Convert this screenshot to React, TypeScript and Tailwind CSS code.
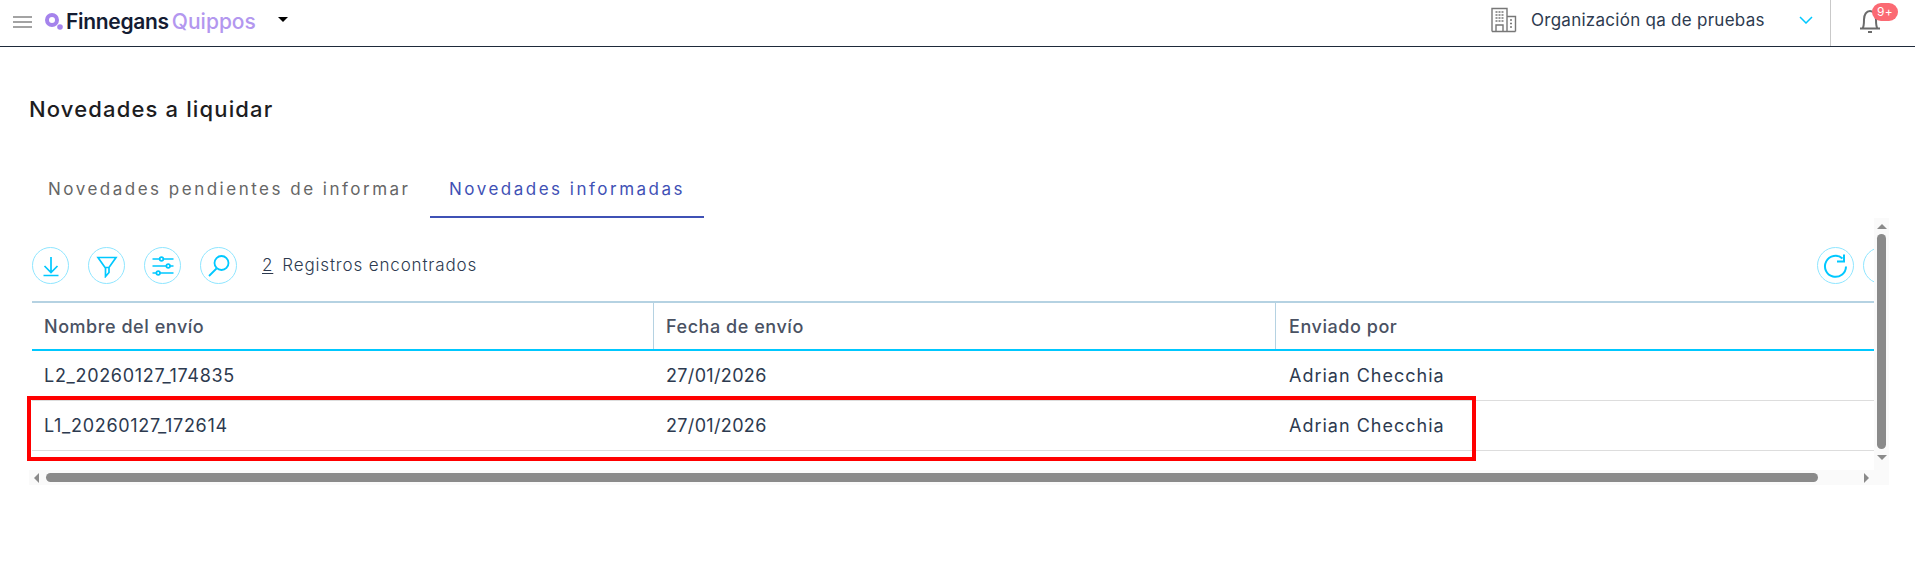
import React from "react";

const cyan = "#00c8ff";

function Circle({ children }: { children: React.ReactNode }) {
  return (
    <div className="w-[37px] h-[37px] shrink-0 rounded-full border border-[#8fe6ff] flex items-center justify-center">
      {children}
    </div>
  );
}

function IconDownload() {
  return (
    <svg width="24" height="24" viewBox="0 0 24 24" fill="none" stroke={cyan} strokeWidth="1.700">
      <path d="M12 3v15M5.500 12l6.500 6.500 6.500-6.500M4.500 21.500h15" />
    </svg>
  );
}
function IconFilter() {
  return (
    <svg width="24" height="24" viewBox="0 0 24 24" fill="none" stroke={cyan} strokeWidth="1.700">
      <path d="M3 3.500h18l-7 10H10L3 3.500zM10.500 13.500v9l3.500-4v-5" />
    </svg>
  );
}
function IconSliders() {
  return (
    <svg width="24" height="24" viewBox="0 0 24 24" fill="none" stroke={cyan} strokeWidth="1.700">
      <path d="M1.500 5h7.500M12.500 5h10M1.500 12h14M19 12h3.500M1.500 19h4M9 19h13.500" />
      <circle cx="10.500" cy="5" r="1.800" />
      <circle cx="17.200" cy="12" r="1.800" />
      <circle cx="7.200" cy="19" r="1.800" />
    </svg>
  );
}
function IconSearch() {
  return (
    <svg width="24" height="24" viewBox="0 0 24 24" fill="none" stroke={cyan} strokeWidth="1.800">
      <circle cx="14.500" cy="9" r="7" />
      <path d="M9.500 14.500L2 22" />
    </svg>
  );
}
function IconRefresh() {
  return (
    <svg width="26" height="26" viewBox="0 0 26 26" fill="none" stroke={cyan} strokeWidth="2">
      <path d="M23 13.500A10.500 10.500 0 1 1 19.500 5.500" />
      <path d="M21 1.500V8.500H14" />
    </svg>
  );
}

function Head({ children, last }: { children: React.ReactNode; last?: boolean }) {
  return (
    <div
      className={`w-[622px] shrink-0 h-full flex items-center pt-[1px] font-medium text-[#4a5263] text-[18px] tracking-[0.55px] ${
        last ? "pl-[13px]" : "pl-3 border-r border-[#b5d2e2]"
      }`}
    >
      {children}
    </div>
  );
}

function Row({ name }: { name: string }) {
  return (
    <div className="h-[50px] flex items-center border-b border-[#dddddd] text-[#2d3a4f] text-[18px]">
      <div className="w-[622px] shrink-0 pl-3 tracking-[0.7px]">{name}</div>
      <div className="w-[622px] shrink-0 pl-3 tracking-[0.34px]">27/01/2026</div>
      <div className="w-[622px] shrink-0 pl-[13px] tracking-[1px]">Adrian Checchia</div>
    </div>
  );
}

export default function App() {
  return (
    <div className="relative w-[1915px] h-[573px] bg-white overflow-hidden font-['Inter',sans-serif]">
      <header className="h-[47px] border-b border-[#1e2a3a] flex items-center">
        <div className="ml-[13px] mb-[3px] w-[19px] flex flex-col gap-[3px]">
          <div className="h-[2px] bg-[#a3a3a3]" />
          <div className="h-[2px] bg-[#a3a3a3]" />
          <div className="h-[2px] bg-[#a3a3a3]" />
        </div>
        <svg className="ml-[13px] mb-[3px]" width="18" height="17" viewBox="0 0 18 17" fill="none">
          <circle cx="7" cy="7" r="5" stroke="#a583ec" strokeWidth="4" />
          <circle cx="15" cy="14" r="2.800" fill="#a583ec" />
        </svg>
        <span className="ml-[3px] mb-[2px] text-[21px] font-semibold text-[#141c33] tracking-[-0.3px]">Finnegans</span>
        <span className="ml-[3px] mb-[2px] text-[21px] font-medium text-[#b397ef] tracking-[0px]">Quippos</span>
        <div className="ml-[22px] mb-[8px] w-0 h-0 border-x-[5px] border-x-transparent border-t-[5px] border-t-black" />
        <div className="ml-auto flex items-center h-full">
          <svg className="mb-[6px]" width="26" height="26" viewBox="0 0 26 26" fill="none" stroke="#777" strokeWidth="1.400">
            <path d="M1 24.500V1.500h15v23M16 9.500h8.500v15M1 24.500h23.500M5 24.500v-6.500h7v6.500" />
            <path d="M4.500 5h8M4.500 8h8M4.500 11h8M4.500 14h8M19 13h3M19 16.500h3M19 20h3" strokeDasharray="2 1" />
          </svg>
          <span className="ml-[14px] mb-[5px] w-[268px] whitespace-nowrap text-[17px] text-[#2d3a4f] tracking-[0.27px]">Organización qa de pruebas</span>
          <svg className="mb-[7px]" width="14" height="8" viewBox="0 0 14 8" fill="none" stroke={cyan} strokeWidth="1.500">
            <path d="M1 1l6 6 6-6" />
          </svg>
          <div className="ml-[17px] h-full border-l border-[#c9c9c9]" />
          <div className="relative w-[84px] h-full">
            <svg className="absolute left-[28px] top-[8px]" width="24" height="26" viewBox="0 0 24 26" fill="none" stroke="#6b6b6b" strokeWidth="2">
              <path d="M1 20.500h20M3.500 20.500c1.500-2 1.500-5 1.500-9 0-5 2.500-8.500 6-8.500s6 3.500 6 8.500c0 4 0 7 1.500 9" />
              <path d="M9 24h4" />
            </svg>
            <div className="absolute left-[41px] top-[3px] w-[26px] h-[18px] rounded-full bg-[#fb6a73] text-white text-[12px] tracking-[0.4px] flex items-center justify-center">
              9+
            </div>
          </div>
        </div>
      </header>

      <main className="pl-[29px]">
        <h1 className="mt-[50px] text-[22px] leading-[25px] font-medium text-[#1d1d1f] tracking-[1.150px]">Novedades a liquidar</h1>
        <nav className="mt-[40px] flex h-[56px] text-[17px] tracking-[2.500px]">
          <div className="w-[401px] pl-[19px] pt-[15px] text-[#666666] whitespace-nowrap">Novedades pendientes de informar</div>
          <div className="w-[274px] pl-[19px] pt-[15px] text-[#3f51b5] border-b-2 border-[#3f51b5] whitespace-nowrap">Novedades informadas</div>
        </nav>

        <div className="relative w-[1860px] h-[268px] flex">
          <div className="w-[1845px] overflow-hidden">
            <div className="mt-[29px] pl-[3px] h-[37px] flex items-center gap-[19px]">
              <Circle><IconDownload /></Circle>
              <Circle><IconFilter /></Circle>
              <Circle><IconSliders /></Circle>
              <Circle><IconSearch /></Circle>
              <div className="ml-[6px] flex items-center gap-[9px] text-[17px] font-light text-[#2d3a4f] tracking-[0.85px]">
                <span className="underline underline-offset-2">2</span>
                <span>Registros encontrados</span>
              </div>
              <div className="ml-auto -mr-[26px] flex gap-[9px]">
                <Circle><IconRefresh /></Circle>
                <Circle><span /></Circle>
              </div>
            </div>

            <div className="ml-[3px] mt-[17px] w-[1842px] border-t-2 border-[#b5d2e2]">
              <div className="h-[48px] flex border-b-2 border-[#00c8ff]">
                <Head>Nombre del envío</Head>
                <Head>Fecha de envío</Head>
                <Head last>Enviado por</Head>
              </div>
              <Row name="L2_20260127_174835" />
              <Row name="L1_20260127_172614" />
            </div>
          </div>

          <div className="w-[15px] h-[252px] bg-[#fafafa] flex flex-col items-center">
            <div className="mt-[6px] w-0 h-0 border-x-[5px] border-x-transparent border-b-[5px] border-b-[#8a8a8a]" />
            <div className="mt-[5px] w-[9px] h-[215px] rounded-full bg-[#8a8a8a]" />
            <div className="mt-[6px] w-0 h-0 border-x-[5px] border-x-transparent border-t-[5px] border-t-[#8a8a8a]" />
          </div>

          <div className="absolute left-0 top-[252px] w-[1860px] h-[15px] bg-[#fafafa] flex items-center">
            <div className="ml-[5px] w-0 h-0 border-y-[5px] border-y-transparent border-r-[5px] border-r-[#8a8a8a]" />
            <div className="ml-[7px] w-[1772px] h-[9px] rounded-full bg-[#8a8a8a]" />
            <div className="ml-[46px] w-0 h-0 border-y-[5px] border-y-transparent border-l-[5px] border-l-[#8a8a8a]" />
          </div>
        </div>
      </main>

      <div className="absolute left-[27px] top-[396px] w-[1449px] h-[65px] border-4 border-[#ff0000]" />
    </div>
  );
}
